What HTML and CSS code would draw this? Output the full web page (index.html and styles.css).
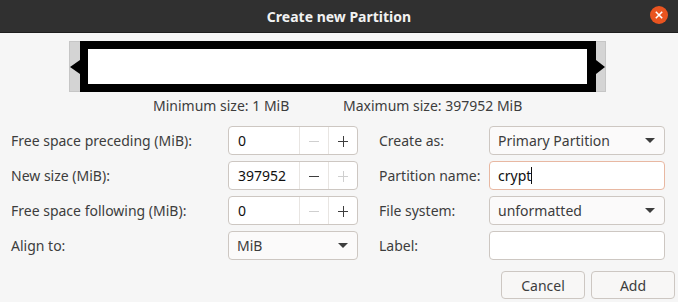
FILE: index.html
```html
<!DOCTYPE html>
<html>
  <head>
    <meta charset="utf-8" />
    <title>Create new Partition</title>
    <link rel="stylesheet" href="styles.css">
  </head>
  <body>
    <div class="window">
      <!-- title bar -->
      <div class="titlebar">
        <span class="title">Create new Partition</span>
        <span class="close">
          <svg width="18" height="18" viewBox="0 0 18 18">
            <circle cx="9" cy="9" r="9" fill="#e95420" />
            <path d="M5.8 5.8 L12.2 12.2 M12.2 5.8 L5.8 12.2" stroke="#fff" stroke-width="1.6" />
          </svg>
        </span>
      </div>

      <div class="content">
        <!-- partition map -->
        <div class="partmap">
          <div class="handle left"><span class="arrow-left"></span></div>
          <div class="part"><div class="part-inner"></div></div>
          <div class="handle right"><span class="arrow-right"></span></div>
        </div>
        <div class="limits">
          <span class="limit-min">Minimum size: 1 MiB</span>
          <span>Maximum size: 397952 MiB</span>
        </div>

        <!-- form -->
        <div class="form">
          <label class="lbl">Free space preceding (MiB):</label>
          <div class="spin">
            <span class="spin-value">0</span>
            <span class="spin-btn disabled"><svg width="12" height="12" viewBox="0 0 12 12"><path d="M1 6.5 H11" /></svg></span>
            <span class="spin-btn"><svg width="12" height="12" viewBox="0 0 12 12"><path d="M1 6.5 H11 M6.5 1 V12" /></svg></span>
          </div>
          <span></span>
          <label class="lbl">Create as:</label>
          <div class="combo">
            <span>Primary Partition</span>
            <span class="caret-down"></span>
          </div>

          <label class="lbl">New size (MiB):</label>
          <div class="spin">
            <span class="spin-value">397952</span>
            <span class="spin-btn"><svg width="12" height="12" viewBox="0 0 12 12"><path d="M1 6.5 H11" /></svg></span>
            <span class="spin-btn disabled"><svg width="12" height="12" viewBox="0 0 12 12"><path d="M1 6.5 H11 M6.5 1 V12" /></svg></span>
          </div>
          <span></span>
          <label class="lbl">Partition name:</label>
          <div class="entry focus"><span>crypt</span><span class="cursor"></span></div>

          <label class="lbl">Free space following (MiB):</label>
          <div class="spin">
            <span class="spin-value">0</span>
            <span class="spin-btn disabled"><svg width="12" height="12" viewBox="0 0 12 12"><path d="M1 6.5 H11" /></svg></span>
            <span class="spin-btn"><svg width="12" height="12" viewBox="0 0 12 12"><path d="M1 6.5 H11 M6.5 1 V12" /></svg></span>
          </div>
          <span></span>
          <label class="lbl">File system:</label>
          <div class="combo">
            <span>unformatted</span>
            <span class="caret-down"></span>
          </div>

          <label class="lbl">Align to:</label>
          <div class="combo">
            <span>MiB</span>
            <span class="caret-down"></span>
          </div>
          <span></span>
          <label class="lbl">Label:</label>
          <div class="entry"></div>
        </div>

        <!-- buttons -->
        <div class="actions">
          <button class="btn">Cancel</button>
          <button class="btn">Add</button>
        </div>
      </div>
    </div>
  </body>
</html>
```

FILE: styles.css
```css
body {
  margin: 0;
  padding: 0;
  background-color: #f6f6f6;
  font-family: "Noto Sans", "DejaVu Sans", sans-serif;
  font-size: 14px;
  color: #3d3d3d;
}
.window {
  width: 678px;
  height: 302px;
  overflow: hidden;
}
.titlebar {
  height: 32px;
  background-color: #303030;
  border-bottom: 1px solid #1e1e1e;
  display: flex;
  align-items: center;
  justify-content: center;
  position: relative;
}
.title {
  color: #f2f2f2;
  font-weight: bold;
  font-size: 14px;
}
.close {
  position: absolute;
  right: 10px;
  top: 6px;
  width: 18px;
  height: 18px;
}
.content {
  padding-top: 8px;
}
.partmap {
  margin-left: 69px;
  width: 535px;
  height: 49px;
  border: 1px solid #c6c6c6;
  background-color: #d4d4d4;
  display: flex;
}
.handle {
  width: 10px;
  display: flex;
  align-items: center;
}
.handle.right {
  justify-content: flex-end;
  width: 9px;
}
.arrow-left {
  width: 0;
  height: 0;
  border-top: 7px solid transparent;
  border-bottom: 7px solid transparent;
  border-right: 10px solid #000;
}
.arrow-right {
  width: 0;
  height: 0;
  border-top: 7px solid transparent;
  border-bottom: 7px solid transparent;
  border-left: 9px solid #000;
}
.part {
  flex: 1;
  background-color: #000;
  padding: 8px 9px 8px 8px;
  margin-top: -1px;
  margin-bottom: -1px;
}
.part-inner {
  height: 100%;
  background-color: #fff;
}
.limits {
  display: flex;
  margin-left: 153px;
  height: 17px;
  line-height: 17px;
  margin-top: 5px;
  white-space: nowrap;
}
.limit-min {
  width: 190px;
}
.form {
  display: grid;
  grid-template-columns: 217px 130px 21px 110px 176px;
  grid-auto-rows: 29px;
  row-gap: 6px;
  padding-left: 11px;
  margin-top: 12px;
}
.lbl {
  display: flex;
  align-items: center;
}
.spin, .combo, .entry {
  box-sizing: border-box;
  border: 1px solid #cdc7c2;
  border-radius: 4px;
  background-color: #fff;
  display: flex;
  align-items: center;
  color: #101010;
}
.spin-value {
  flex: 1;
  padding-left: 9px;
}
.spin-btn {
  width: 28px;
  height: 100%;
  border-left: 1px solid #e8e5e2;
  display: flex;
  align-items: center;
  justify-content: center;
}
.spin-btn path {
  stroke: #3d3d3d;
  stroke-width: 1;
  fill: none;
}
.spin-btn.disabled path {
  stroke: #cfcfcf;
}
.combo {
  background-color: #fbfafa;
  padding: 0 9px 0 8px;
  justify-content: space-between;
  color: #3d3d3d;
}
.caret-down {
  width: 0;
  height: 0;
  border-left: 5px solid transparent;
  border-right: 5px solid transparent;
  border-top: 5px solid #3d3d3d;
}
.entry {
  padding-left: 8px;
}
.entry.focus {
  border-color: #e8b8a2;
}
.cursor {
  width: 1px;
  height: 17px;
  background-color: #101010;
}
.actions {
  display: flex;
  justify-content: flex-end;
  gap: 6px;
  padding-right: 3px;
  margin-top: 11px;
}
.btn {
  width: 84px;
  height: 28px;
  border: 1px solid #cdc7c2;
  border-radius: 4px;
  background-color: #f8f7f6;
  font-family: inherit;
  font-size: 14px;
  color: #3d3d3d;
}
```
